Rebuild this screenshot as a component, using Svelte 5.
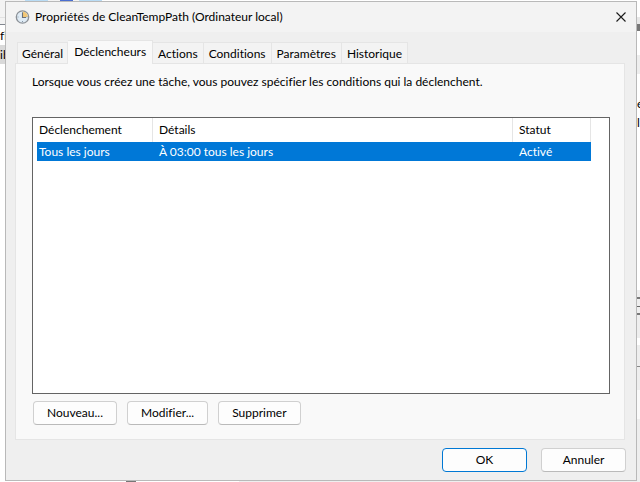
<script lang="ts">
  interface Trigger {
    kind: string;
    details: string;
    status: string;
  }

  const tabs = ["Général", "Déclencheurs", "Actions", "Conditions", "Paramètres", "Historique"];
  const triggers: Trigger[] = [
    { kind: "Tous les jours", details: "À 03:00 tous les jours", status: "Activé" },
  ];

  let active = $state("Déclencheurs");
  let selected = $state(0);
</script>

<div class="desktop">
  <div class="top"></div>
  <div class="left">
    <span class="name">fi</span>
    <span class="name current">ib</span>
  </div>
  <main class="dialog">
    <header>
      <svg class="clock" viewBox="0 0 16 16" aria-hidden="true">
        <circle cx="7.5" cy="8" r="6.2" fill="#dfebf5" stroke="#8c9197" stroke-width="1.3" />
        <path d="M7.5 8V2.6A5.4 5.4 0 0 1 12.9 8z" fill="#f3c877" />
        <path d="M7.5 3v1M7.5 12v1M2.5 8h1M11.5 8h1" stroke="#8798a8" stroke-width="1" />
        <path d="M7.5 4v4.5H11" fill="none" stroke="#6b7178" stroke-width="1.1" />
      </svg>
      <h1>Propriétés de CleanTempPath (Ordinateur local)</h1>
      <button class="close" aria-label="Fermer">
        <svg viewBox="0 0 10 10" aria-hidden="true">
          <path d="M0.5 0.5l9 9M9.5 0.5l-9 9" stroke="#1a1a1a" stroke-width="1.1" />
        </svg>
      </button>
    </header>

    <div class="tabs" role="tablist">
      {#each tabs as tab}
        <button role="tab" class="tab" class:active={tab === active} aria-selected={tab === active} onclick={() => (active = tab)}>{tab}</button>
      {/each}
    </div>

    <section class="panel">
      <p>Lorsque vous créez une tâche, vous pouvez spécifier les conditions qui la déclenchent.</p>
      <div class="list">
        <table>
          <thead>
            <tr>
              <th class="kind">Déclenchement</th>
              <th>Détails</th>
              <th class="status">Statut</th>
            </tr>
          </thead>
          <tbody>
            {#each triggers as trigger, i}
              <tr class:selected={i === selected} onclick={() => (selected = i)}>
                <td>{trigger.kind}</td>
                <td>{trigger.details}</td>
                <td>{trigger.status}</td>
              </tr>
            {/each}
          </tbody>
        </table>
      </div>
      <div class="actions">
        <button class="btn">Nouveau...</button>
        <button class="btn">Modifier...</button>
        <button class="btn">Supprimer</button>
      </div>
    </section>

    <footer>
      <button class="btn wide default">OK</button>
      <button class="btn wide">Annuler</button>
    </footer>
  </main>
  <div class="right">
    <span class="name">é</span>
    <span class="name">l</span>
  </div>
  <div class="bottom"></div>
</div>

<style>
  :global(body) {
    background: #fff;
  }
  .desktop {
    display: grid;
    grid-template-columns: 5px minmax(0, 1fr) 3px;
    grid-template-rows: 1px auto 1px;
    font: 12px/16px Lato, "Open Sans", sans-serif;
    font-variant-ligatures: none;
    color: #000;
  }
  /* window edges showing around the dialog */
  .top {
    grid-column: 1 / -1;
    background: linear-gradient(90deg, #f3f3f3 25px, #b9dcf5 25px 48px, #f3f3f3 48px 60px, #4a6ed0 60px 73px, #f3f3f3 73px 79px, #b9dcf5 79px 102px, #fff 102px);
  }
  .bottom {
    grid-column: 1 / -1;
    background: linear-gradient(90deg, #fff 126px, #777 126px 136px, #fff 136px 239px, #efefef 239px);
  }
  .left,
  .right {
    overflow: hidden;
  }
  .left {
    padding-top: 25px;
    background: linear-gradient(#f3f3f3 16px, #e2e2e2 16px 17px, #f3f3f3 17px 23px, #828790 23px 24px, #fff 24px);
  }
  .right {
    padding-top: 93px;
    background: linear-gradient(#fff 16px, #e8e8e8 16px 23px, #777 23px 30px, #fff 30px 54px, #eee 54px 73px, #fff 73px 289px, #eee 289px 296px, #777 296px 298px, #eee 298px 305px, #666 305px 306px, #eee 306px 312px, #777 312px 314px, #eee 314px 337px, #fff 337px 344px, #eee 344px 365px, #888 365px 366px, #eee 366px 389px, #fafafa 389px 418px, #eee 418px);
  }
  .name {
    display: block;
    line-height: 19px;
  }
  .current {
    background: #d9d9d9;
  }
  .dialog {
    box-sizing: border-box;
    border: 1px solid #b9b9b9;
    background: #efefef;
  }
  header {
    display: flex;
    align-items: center;
    height: 30px;
    padding-left: 9px;
    background: #f3f3f3;
  }
  .clock {
    width: 16px;
    height: 16px;
  }
  h1 {
    flex: 1;
    margin: 0 0 0 4px;
    font-size: 12px;
    font-weight: 400;
  }
  .close {
    display: flex;
    padding: 10px;
    border: 0;
    background: none;
  }
  .close svg {
    width: 10px;
    height: 10px;
  }
  .tabs {
    display: flex;
    align-items: flex-end;
    margin: 8px 11px 0;
  }
  .tab {
    height: 21px;
    padding: 2px 5px 0;
    border: solid #e5e5e5;
    border-width: 1px 1px 0 0;
    background: #f3f3f3;
    color: inherit;
    font: inherit;
    font-variant-ligatures: none;
    white-space: nowrap;
  }
  .tab:first-child {
    padding: 2px 4px 0;
    border-left-width: 1px;
  }
  .tab.active {
    z-index: 1;
    height: 24px;
    margin-bottom: -1px;
    padding: 0 6px 2px;
    background: #f9f9f9;
  }
  .panel {
    margin: 0 11px 0 9px;
    padding: 10px 14px 14px 16px;
    border: 1px solid #e5e5e5;
    background: #f9f9f9;
  }
  p {
    margin: 0 0 27px;
  }
  .list {
    box-sizing: border-box;
    min-height: 277px;
    padding: 0 18px 0 4px;
    border: 1px solid #646464;
    background: #fff;
  }
  table {
    width: 100%;
    border-collapse: separate;
    border-spacing: 0;
    table-layout: fixed;
  }
  th,
  td {
    box-sizing: border-box;
    padding: 0 2px;
    font-weight: 400;
    text-align: left;
  }
  th {
    height: 24px;
    border-right: 1px solid #e5e5e5;
  }
  td {
    height: 19px;
  }
  th + th,
  td + td {
    padding-left: 6px;
  }
  .kind {
    width: 116px;
  }
  .status {
    width: 78px;
  }
  .selected {
    background: #0078d7;
    color: #fff;
  }
  .actions {
    display: flex;
    gap: 10px;
    margin: 7px 1px 0;
  }
  .btn {
    box-sizing: border-box;
    height: 24px;
    padding: 0 13px;
    border: 1px solid #d0d0d0;
    border-bottom-color: #bababa;
    border-radius: 4px;
    background: #fdfdfd;
    color: inherit;
    font: inherit;
    font-variant-ligatures: none;
  }
  .wide {
    width: 85px;
  }
  .default {
    border-color: #0078d4;
  }
  footer {
    display: flex;
    justify-content: flex-end;
    gap: 14px;
    padding: 8px 10px;
  }
</style>
